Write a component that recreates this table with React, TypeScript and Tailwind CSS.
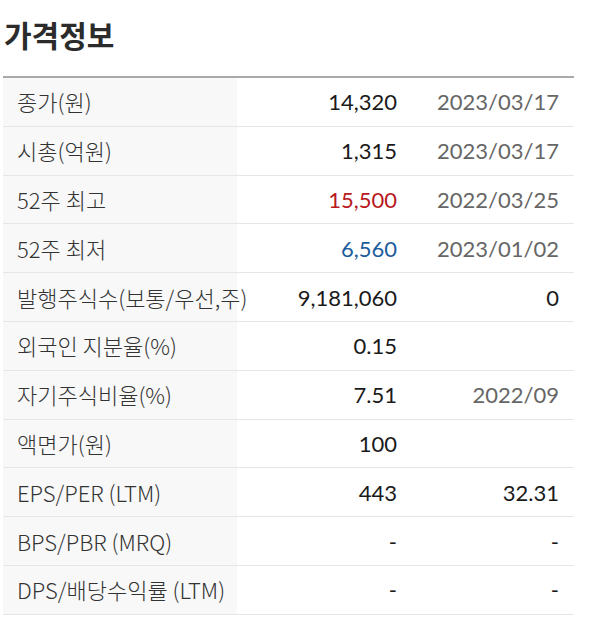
import React from "react";

type Row = { label: string; value: string; extra: string; valueClass: string; extraClass: string };

const rows: Row[] = [
  { label: "종가(원)", value: "14,320", extra: "2023/03/17", valueClass: "text-[#1a1a1a]", extraClass: "text-[#666]" },
  { label: "시총(억원)", value: "1,315", extra: "2023/03/17", valueClass: "text-[#1a1a1a]", extraClass: "text-[#666]" },
  { label: "52주 최고", value: "15,500", extra: "2022/03/25", valueClass: "text-[#b8191d]", extraClass: "text-[#666]" },
  { label: "52주 최저", value: "6,560", extra: "2023/01/02", valueClass: "text-[#1d5c9c]", extraClass: "text-[#666]" },
  { label: "발행주식수(보통/우선,주)", value: "9,181,060", extra: "0", valueClass: "text-[#1a1a1a]", extraClass: "text-[#1a1a1a]" },
  { label: "외국인 지분율(%)", value: "0.15", extra: "", valueClass: "text-[#1a1a1a]", extraClass: "text-[#666]" },
  { label: "자기주식비율(%)", value: "7.51", extra: "2022/09", valueClass: "text-[#1a1a1a]", extraClass: "text-[#666]" },
  { label: "액면가(원)", value: "100", extra: "", valueClass: "text-[#1a1a1a]", extraClass: "text-[#666]" },
  { label: "EPS/PER (LTM)", value: "443", extra: "32.31", valueClass: "text-[#1a1a1a]", extraClass: "text-[#1a1a1a]" },
  { label: "BPS/PBR (MRQ)", value: "-", extra: "-", valueClass: "text-[#1a1a1a]", extraClass: "text-[#1a1a1a]" },
  { label: "DPS/배당수익률 (LTM)", value: "-", extra: "-", valueClass: "text-[#1a1a1a]", extraClass: "text-[#1a1a1a]" },
];

export default function App() {
  return (
    <div className="w-[600px] h-[631px] bg-white pl-[3px] pt-[13px] overflow-hidden">
      <h1 className="h-[42px] leading-[42px] text-[30px] font-bold text-[#2b2b2b] pl-[1px] font-[family-name:'Noto_Sans_CJK_KR',sans-serif]">
        가격정보
      </h1>
      <div className="mt-[21px] w-[571px] border-t-2 border-[#a9a9a9]">
        {rows.map((r, i) => (
          <div
            key={i}
            className="grid grid-cols-[234px_175px_162px] h-[48.8px] border-b border-[#e4e7e9] box-border"
          >
            <div className="bg-[#f8f8f8] flex items-center pl-[14px] text-[22px] font-light text-[#333] whitespace-nowrap font-[family-name:'Noto_Sans_CJK_KR',sans-serif]">
              {r.label}
            </div>
            <div
              className={`flex items-center justify-end pr-[15px] text-[22px] font-normal font-[family-name:Lato,'Noto_Sans_CJK_KR',sans-serif] ${r.valueClass}`}
            >
              {r.value}
            </div>
            <div
              className={`flex items-center justify-end pr-[15px] text-[22px] font-normal font-[family-name:Lato,'Noto_Sans_CJK_KR',sans-serif] ${r.extraClass}`}
            >
              {r.extra}
            </div>
          </div>
        ))}
      </div>
    </div>
  );
}
